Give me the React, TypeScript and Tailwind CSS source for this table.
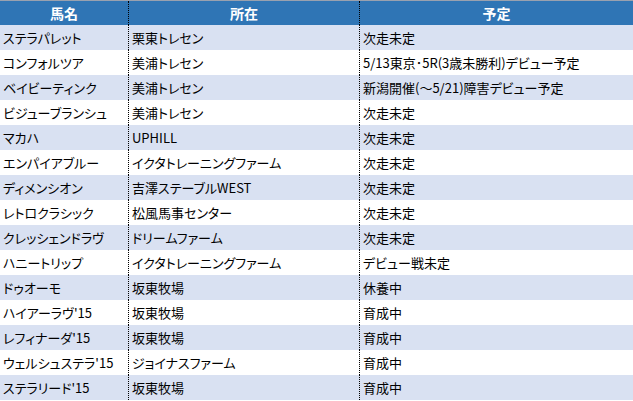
const rows: [string, string, string][] = [
  ["ステラパレット", "栗東トレセン", "次走未定"],
  ["コンフォルツア", "美浦トレセン", "5/13東京･5R(3歳未勝利)デビュー予定"],
  ["ベイビーティンク", "美浦トレセン", "新潟開催(～5/21)障害デビュー予定"],
  ["ビジューブランシュ", "美浦トレセン", "次走未定"],
  ["マカハ", "UPHILL", "次走未定"],
  ["エンパイアブルー", "イクタトレーニングファーム", "次走未定"],
  ["ディメンシオン", "吉澤ステーブルWEST", "次走未定"],
  ["レトロクラシック", "松風馬事センター", "次走未定"],
  ["クレッシェンドラヴ", "ドリームファーム", "次走未定"],
  ["ハニートリップ", "イクタトレーニングファーム", "デビュー戦未定"],
  ["ドゥオーモ", "坂東牧場", "休養中"],
  ["ハイアーラヴ'15", "坂東牧場", "育成中"],
  ["レフィナーダ'15", "坂東牧場", "育成中"],
  ["ウェルシュステラ'15", "ジョイナスファーム", "育成中"],
  ["ステラリード'15", "坂東牧場", "育成中"],
];

export default function App() {
  return (
    <div
      className="w-[633px] h-[401px] overflow-hidden bg-white text-black text-[13px] leading-none [font-feature-settings:'palt']"
      style={{ fontFamily: '"Noto Sans CJK JP", "Noto Sans", sans-serif' }}
    >
      {/* header */}
      <div className="grid grid-cols-[129px_231px_1fr] h-[25px] border-t border-gray-400 bg-[#2f75b5] text-white font-bold text-[14px]">
        <div className="flex items-center justify-center border-r border-dotted border-black">馬名</div>
        <div className="flex items-center justify-center border-r border-dotted border-black">所在</div>
        <div className="flex items-center justify-center">予定</div>
      </div>

      {rows.map(([name, place, plan], i) => (
        <div
          key={i}
          className={`grid grid-cols-[129px_231px_1fr] h-[25px] ${i % 2 === 0 ? "bg-[#d9e1f2]" : "bg-white"}`}
        >
          <div className="flex items-center pl-[3px] border-r border-dotted border-black whitespace-nowrap overflow-hidden">
            {name}
          </div>
          <div className="flex items-center pl-[3px] border-r border-dotted border-black whitespace-nowrap overflow-hidden">
            {place}
          </div>
          <div className="flex items-center pl-[3px] whitespace-nowrap overflow-hidden">{plan}</div>
        </div>
      ))}
    </div>
  );
}
